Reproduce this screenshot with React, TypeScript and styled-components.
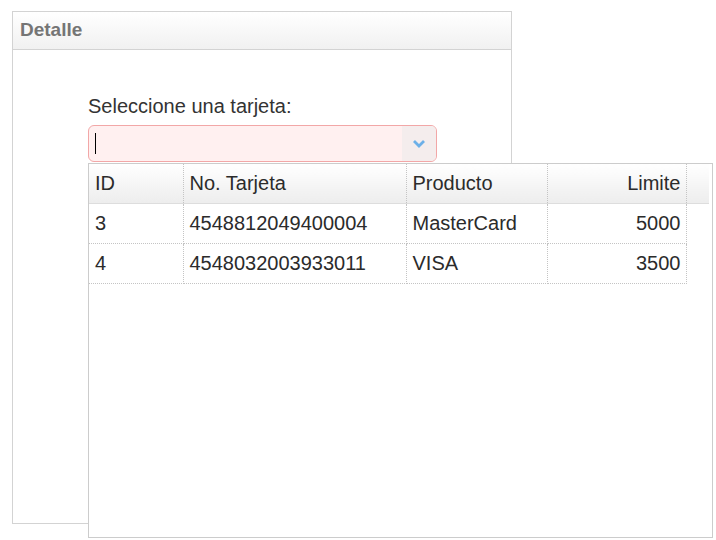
import React from 'react';
import styled, { createGlobalStyle } from 'styled-components';

const GlobalStyle = createGlobalStyle`
  body {
    margin: 0;
    background: #ffffff;
    font-family: "Liberation Sans", Arial, sans-serif;
    color: #333333;
  }
`;

const Page = styled.div`
  padding: 11px 0 0 12px;
  width: 716px;
  height: 540px;
  box-sizing: border-box;
  overflow: hidden;
`;

const Panel = styled.section`
  width: 500px;
  height: 513px;
  box-sizing: border-box;
  border: 1px solid #d3d3d3;
  display: flex;
  flex-direction: column;
`;

const PanelHeader = styled.header`
  height: 37px;
  line-height: 36px;
  padding-left: 7px;
  border-bottom: 1px solid #d3d3d3;
  background: linear-gradient(#ffffff, #f1f1f1);
  font-size: 19px;
  font-weight: bold;
  color: #757575;
`;

const PanelBody = styled.div`
  padding: 45px 0 0 75px;
`;

const Label = styled.label`
  display: block;
  font-size: 20px;
  line-height: 23px;
  color: #333333;
  margin-bottom: 7px;
`;

const Combo = styled.div`
  position: relative;
  width: 349px;
`;

const ComboBox = styled.div`
  display: flex;
  height: 37px;
  box-sizing: border-box;
  border: 1px solid #f2a7a7;
  border-radius: 6px;
  background: #fff0f0;
  overflow: hidden;
`;

const ComboInput = styled.div`
  flex: 1;
  position: relative;
`;

const Caret = styled.span`
  position: absolute;
  left: 6px;
  top: 7px;
  width: 1px;
  height: 21px;
  background: #000000;
`;

const ComboButton = styled.div`
  width: 34px;
  display: flex;
  align-items: center;
  justify-content: center;
  background: #f4eded;
`;

const Popup = styled.div`
  position: absolute;
  top: calc(100% + 1px);
  left: 0;
  width: 625px;
  height: 375px;
  box-sizing: border-box;
  border: 1px solid #cccccc;
  background: #ffffff;
  z-index: 2;
`;

const Table = styled.table`
  border-collapse: collapse;
  table-layout: fixed;
  width: 620px;
  font-size: 20px;
  color: #2b2b2b;
`;

const HeadCell = styled.th<{ $right?: boolean; $last?: boolean }>`
  height: 39px;
  padding: 0 5px 0 6px;
  font-weight: normal;
  text-align: ${(p) => (p.$right ? 'right' : 'left')};
  background: linear-gradient(#ffffff, #ededed);
  border-bottom: 1px solid #dddddd;
  border-right: ${(p) => (p.$last ? 'none' : '1px dotted #c4c4c4')};
`;

const Cell = styled.td<{ $right?: boolean }>`
  height: 39px;
  padding: 0 5px 0 6px;
  text-align: ${(p) => (p.$right ? 'right' : 'left')};
  border-right: 1px dotted #c4c4c4;
  border-bottom: 1px dotted #c4c4c4;
`;

const cards = [
  { id: 3, number: '4548812049400004', product: 'MasterCard', limit: 5000 },
  { id: 4, number: '4548032003933011', product: 'VISA', limit: 3500 },
];

const Chevron = () => (
  <svg width="14" height="9" viewBox="0 0 14 9">
    <polyline points="2,2 7,7 12,2" fill="none" stroke="#6cb0e8" strokeWidth="2.8" />
  </svg>
);

export default function App() {
  return (
    <Page>
      <GlobalStyle />
      <Panel>
        <PanelHeader>Detalle</PanelHeader>
        <PanelBody>
          <Label>Seleccione una tarjeta:</Label>
          <Combo>
            <ComboBox>
              <ComboInput>
                <Caret />
              </ComboInput>
              <ComboButton>
                <Chevron />
              </ComboButton>
            </ComboBox>
            <Popup>
              <Table>
                <colgroup>
                  <col style={{ width: 94 }} />
                  <col style={{ width: 223 }} />
                  <col style={{ width: 141 }} />
                  <col style={{ width: 139 }} />
                  <col style={{ width: 23 }} />
                </colgroup>
                <thead>
                  <tr>
                    <HeadCell>ID</HeadCell>
                    <HeadCell>No. Tarjeta</HeadCell>
                    <HeadCell>Producto</HeadCell>
                    <HeadCell $right>Limite</HeadCell>
                    <HeadCell $last />
                  </tr>
                </thead>
                <tbody>
                  {cards.map((c) => (
                    <tr key={c.id}>
                      <Cell>{c.id}</Cell>
                      <Cell>{c.number}</Cell>
                      <Cell>{c.product}</Cell>
                      <Cell $right>{c.limit}</Cell>
                    </tr>
                  ))}
                </tbody>
              </Table>
            </Popup>
          </Combo>
        </PanelBody>
      </Panel>
    </Page>
  );
}
